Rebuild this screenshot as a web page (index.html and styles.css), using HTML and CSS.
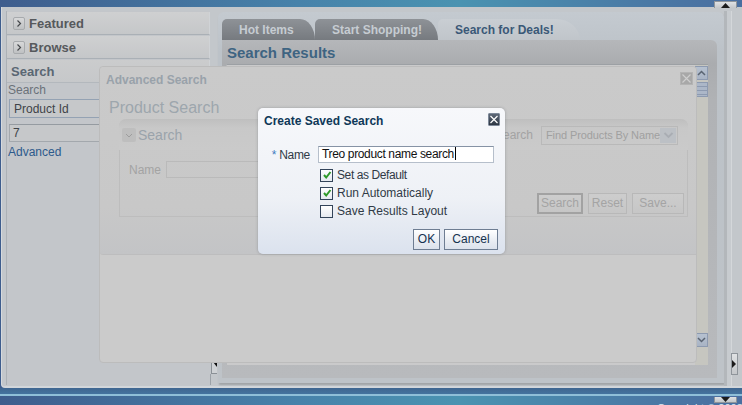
FILE: index.html
```html
<!DOCTYPE html>
<html lang="en">
<head>
    <meta charset="UTF-8">
    <meta name="viewport" content="width=device-width, initial-scale=1.0">
    <title>Search for Deals</title>
    <link rel="stylesheet" href="styles.css">
</head>
<body>
    <div class="topbar">
        <span class="edge-btn wide"><svg width="9" height="5" viewBox="0 0 9 5"><polygon points="0,5 9,5 4.5,0" fill="#1b1b1b"/></svg></span>
    </div>

    <div class="shell">
        <aside class="sidebar">
            <div class="acc-head">
                <span class="acc-icon"><svg width="10" height="11" viewBox="0 0 10 11"><path d="M3.5 2.5 L6.5 5.5 L3.5 8.5" fill="none" stroke="#45484b" stroke-width="1.2"/></svg></span>
                Featured
            </div>
            <div class="acc-head">
                <span class="acc-icon"><svg width="10" height="11" viewBox="0 0 10 11"><path d="M3.5 2.5 L6.5 5.5 L3.5 8.5" fill="none" stroke="#45484b" stroke-width="1.2"/></svg></span>
                Browse
            </div>
            <div class="acc-head open">Search</div>
            <div class="acc-body">
                <div class="side-label">Search</div>
                <div class="side-select">Product Id</div>
                <div class="side-input">7</div>
                <a class="side-link" href="#">Advanced</a>
            </div>
        </aside>

        <div class="splitter">
            <span class="split-btn"><svg width="4" height="5" viewBox="0 0 4 5"><polygon points="0,0 4,0 4,5" fill="#111"/></svg></span>
            <span class="split-line"></span>
        </div>

        <main class="content">
            <nav class="tabs">
                <span class="tab">Hot Items</span>
                <span class="tab">Start Shopping!</span>
                <span class="tab active">Search for Deals!</span>
            </nav>
            <section class="results">
                <h2 class="results-title">Search Results</h2>
                <div class="results-body">
                    <div class="vscroll">
                        <span class="sb-btn"><svg width="9" height="6" viewBox="0 0 9 6"><path d="M1 5 L4.5 1.5 L8 5" fill="none" stroke="#5a6472" stroke-width="1.5"/></svg></span>
                        <span class="sb-thumb"></span>
                        <span class="sb-track"></span>
                        <span class="sb-btn"><svg width="9" height="6" viewBox="0 0 9 6"><path d="M1 1 L4.5 4.5 L8 1" fill="none" stroke="#5a6472" stroke-width="1.5"/></svg></span>
                        <span class="sb-tail"></span>
                    </div>
                </div>
            </section>
        </main>

        <div class="rightstrip">
            <span class="edge-btn tall"><svg width="4" height="8" viewBox="0 0 4 8"><polygon points="0,0 4,4 0,8" fill="#1b1b1b"/></svg></span>
        </div>
    </div>

    <div class="bottombar">
        <span class="edge-btn wide low"><svg width="9" height="5" viewBox="0 0 9 5"><polygon points="0,0 9,0 4.5,5" fill="#1b1b1b"/></svg></span>
        <span class="copyright">Copyright © 2008, Oracle</span>
    </div>

    <!-- advanced search popup, dimmed behind the modal dialog -->
    <div class="adv">
        <div class="adv-main">
            <div class="adv-head">
                <span class="adv-title">Advanced Search</span>
                <span class="adv-close"><svg width="11" height="11" viewBox="0 0 11 11"><path d="M1.5 1.5 L9.5 9.5 M9.5 1.5 L1.5 9.5" stroke="#cfcfcf" stroke-width="1.1"/></svg></span>
            </div>
            <div class="adv-heading">Product Search</div>
            <div class="qbox">
                <div class="qbox-head">
                    <div class="qbox-left">
                        <span class="qbox-toggle"><svg width="14" height="14" viewBox="0 0 14 14"><path d="M4 6 L7 9 L10 6" fill="none" stroke="#9d9d9d" stroke-width="1"/></svg></span>
                        <span class="qbox-title">Search</span>
                    </div>
                    <div class="qbox-right">
                        <span class="q-label">Saved Search</span>
                        <span class="q-select">Find Products By Name
                            <span class="q-drop"><svg width="11" height="8" viewBox="0 0 11 8"><path d="M1.5 2 L5.5 6 L9.5 2" fill="none" stroke="#a9adb3" stroke-width="1.8"/></svg></span>
                        </span>
                    </div>
                </div>
                <div class="qbox-body">
                    <div class="q-row">
                        <span class="q-name">Name</span>
                        <span class="q-input"></span>
                    </div>
                    <div class="q-buttons">
                        <span class="q-btn primary">Search</span>
                        <span class="q-btn reset">Reset</span>
                        <span class="q-btn save">Save...</span>
                    </div>
                </div>
            </div>
        </div>
    </div>

    <div class="dialog">
        <div class="dlg-head">
            <span class="dlg-title">Create Saved Search</span>
            <span class="dlg-close"><svg width="10" height="11" viewBox="0 0 10 11"><path d="M1.5 2 L8.5 9 M8.5 2 L1.5 9" stroke="#ffffff" stroke-width="1.2"/></svg></span>
        </div>
        <div class="dlg-form">
            <label class="dlg-label"><span class="req">*</span>Name</label>
            <span class="dlg-input">Treo product name search<span class="caret"></span></span>

            <span></span>
            <label class="check"><span class="box"><svg width="10" height="10" viewBox="0 0 10 10"><path d="M2 5 L4.2 7.5 L8.5 2" fill="none" stroke="#2f9a2a" stroke-width="2"/></svg></span><span class="tight">Set as Default</span></label>

            <span></span>
            <label class="check"><span class="box"><svg width="10" height="10" viewBox="0 0 10 10"><path d="M2 5 L4.2 7.5 L8.5 2" fill="none" stroke="#2f9a2a" stroke-width="2"/></svg></span>Run Automatically</label>

            <span></span>
            <label class="check"><span class="box"></span>Save Results Layout</label>
        </div>
        <div class="dlg-buttons">
            <span class="dlg-btn ok">OK</span>
            <span class="dlg-btn cancel">Cancel</span>
        </div>
    </div>
</body>
</html>
```

FILE: styles.css
```css
* {
    box-sizing: border-box;
}

html, body {
    margin: 0;
}

body {
    width: 742px;
    height: 405px;
    overflow: hidden;
    position: relative;
    font-family: "Liberation Sans", Arial, sans-serif;
    font-size: 12px;
    background: linear-gradient(90deg, #3e5d8d 0%, #4782aa 40%, #4a93b1 62%, #4a7ba6 85%, #4a6ea0 100%);
}

/* edge bars */
.topbar {
    height: 7px;
    display: flex;
    justify-content: flex-end;
    padding: 1px 5px 0 0;
}

.edge-btn {
    display: flex;
    align-items: center;
    justify-content: center;
    background: linear-gradient(#e0e2e4, #c4c7ca);
    border: 1px solid #8f959b;
}

.edge-btn.wide {
    width: 23px;
    height: 7px;
    border-bottom: none;
}

.edge-btn.low {
    border-bottom: 1px solid #8f959b;
    border-top: none;
}

.edge-btn.tall {
    width: 7px;
    height: 22px;
}

.bottombar {
    height: 17px;
    display: flex;
    flex-direction: column;
    align-items: flex-end;
    padding: 9px 5px 0 0;
    background: linear-gradient(#3f6690 0, #44739e 6px, #8fbfd8 6px, #8fbfd8 8px, transparent 8px);
    overflow: hidden;
}

.copyright {
    margin-top: -1px;
    color: #dfe9f0;
    font-size: 11px;
    white-space: nowrap;
    width: 80px;
}

/* main frame */
.shell {
    height: 381px;
    display: flex;
    margin-left: 1px;
    padding: 4px 0 0 4px;
    background: #c3c7cb;
    border-left: 1px solid #d6dade;
    border-bottom: 2px solid #d2d6da;
    border-radius: 0 0 0 4px;
}

.sidebar {
    width: 204px;
    display: flex;
    flex-direction: column;
    background: #c3c6ca;
    border-left: 1px solid #acb1b6;
    margin-bottom: 1px;
}

.acc-head {
    height: 23px;
    margin-top: 1px;
    display: flex;
    align-items: center;
    gap: 4px;
    padding-left: 6px;
    font-size: 13px;
    font-weight: bold;
    color: #56595c;
    background: linear-gradient(#cfd0d1, #c5c7c9);
    border-bottom: 1px solid #aab0b6;
    border-right: 1px solid #d0d3d6;
}

.acc-head.open {
    padding-left: 4px;
    color: #5a6773;
    background: linear-gradient(#cbcccd, #c6c8ca);
    border-bottom: 1px solid #b3b8bd;
}

.acc-icon {
    width: 12px;
    height: 13px;
    display: flex;
    align-items: center;
    justify-content: center;
    border: 1px solid #a7aaad;
    border-radius: 2px;
    background: linear-gradient(#d7d8d9, #bfc1c3);
}

.acc-body {
    display: flex;
    flex-direction: column;
    align-items: flex-start;
    padding-left: 1px;
}

.side-label {
    line-height: 14px;
    color: #6b7279;
}

.side-select {
    margin: 2px 0 0 1px;
    width: 190px;
    height: 19px;
    padding: 2px 4px;
    color: #3e4348;
    background: #c6c8ca;
    border: 1px solid #94a2b3;
}

.side-input {
    margin: 6px 0 0 1px;
    width: 190px;
    height: 18px;
    padding: 1px 3px;
    color: #3e4348;
    background: #c6c8ca;
    border: 1px solid #a3a8ad;
    border-top-color: #959ba1;
}

.side-link {
    margin-top: 3px;
    line-height: 14px;
    color: #2d5a8c;
    text-decoration: none;
}

.splitter {
    width: 8px;
    display: flex;
    flex-direction: column;
    justify-content: flex-end;
    padding-bottom: 1px;
}

.split-btn {
    margin-left: 1px;
    width: 6px;
    height: 12px;
    display: flex;
    justify-content: flex-end;
    border-left: 1px solid #8a9096;
    border-bottom: 1px solid #8a9096;
    background: #cfd2d5;
}

.split-line {
    height: 11px;
    border-left: 1px solid #9ca2a8;
}

/* content with tabs */
.content {
    width: 506px;
    margin: 1px 0 3px 0;
    padding: 7px 7px 0 4px;
    display: flex;
    flex-direction: column;
    background: linear-gradient(#c4cad0, #bcc2c8 40px, #bec3c8);
    border-radius: 6px 6px 0 0;
    box-shadow: 1px 2px 2px rgba(0, 0, 0, 0.18);
}

.tabs {
    height: 21px;
    display: flex;
}

.tab {
    height: 21px;
    line-height: 22px;
    padding-left: 17px;
    font-weight: bold;
    color: #c6ccd2;
    background: linear-gradient(#8e9297, #767a7f);
    border-radius: 5px 15px 0 0 / 5px 21px 0 0;
}

.tab:nth-child(1) {
    width: 93px;
}

.tab:nth-child(2) {
    width: 123px;
}

.tab.active {
    width: 142px;
    color: #3a5877;
    background: linear-gradient(#c9ced3, #c0c5ca);
    border-radius: 5px 24px 0 0 / 5px 21px 0 0;
}

.results {
    flex: 1;
    display: flex;
    flex-direction: column;
    background: linear-gradient(#b5b7ba, #aaacaf 24px, #b0b2b5 60px, #b8babd);
    border-radius: 0 6px 0 0;
    margin-bottom: 5px;
}

.results-title {
    margin: 0;
    height: 24px;
    line-height: 26px;
    padding-left: 5px;
    font-size: 15px;
    color: #3e6482;
}

.results-body {
    flex: 1;
    margin: 0 9px 13px 4px;
    display: flex;
    justify-content: flex-end;
    background: #cacacb;
    border-top: 1px solid #9ca0a4;
    border-left: 1px solid #b7b9bb;
}

.vscroll {
    width: 13px;
    display: flex;
    flex-direction: column;
    padding-top: 1px;
    background: #c6c6c0;
}

.sb-btn {
    height: 14px;
    display: flex;
    align-items: center;
    justify-content: center;
    background: linear-gradient(#b6c1d0, #a9b4c5);
    border: 1px solid #8d9ab0;
}

.sb-thumb {
    height: 15px;
    margin-top: 2px;
    background: repeating-linear-gradient(#acb7c8 0 3px, #8d9ab0 3px 4px);
    border: 1px solid #8d9ab0;
}

.sb-track {
    flex: 1;
}

.sb-tail {
    height: 18px;
}

.rightstrip {
    flex: 1;
    display: flex;
    flex-direction: column;
    justify-content: flex-end;
    align-items: center;
    padding: 0 1px 11px 0;
    border-left: 3px solid #b3b7bb;
    box-shadow: inset 4px 0 0 #c7cbcf, inset 5px 0 0 #d4d7da;
}

/* advanced search popup (dimmed) */
.adv {
    position: absolute;
    left: 99px;
    top: 66px;
    width: 598px;
    height: 297px;
    background: #cbcbcb;
    border: 1px solid #bcbcbc;
    border-radius: 4px;
}

.adv-main {
    height: 188px;
    padding: 6px 3px 0 6px;
    background: linear-gradient(#cacaca, #c8c8c8 140px, #c3c4c6);
    border-radius: 4px 4px 0 3px;
    border-bottom: 1px solid #bdbdbe;
}

.adv-head {
    display: flex;
    justify-content: space-between;
    align-items: flex-start;
}

.adv-title {
    line-height: 14px;
    font-weight: bold;
    color: #99a2aa;
}

.adv-close {
    width: 13px;
    height: 13px;
    margin-top: -1px;
    display: flex;
    align-items: center;
    justify-content: center;
    background: #a8a8a8;
    border: 1px solid #b4b4b4;
}

.adv-heading {
    margin: 12px 0 0 3px;
    line-height: 18px;
    font-size: 16px;
    color: #9da6ad;
}

.qbox {
    margin: 2px 0 0 13px;
    width: 569px;
    height: 98px;
    display: flex;
    flex-direction: column;
}

.qbox-head {
    height: 31px;
    display: flex;
    justify-content: space-between;
    align-items: center;
    padding: 0 10px 0 3px;
    background: linear-gradient(#c0c0c0, #c8c8c8 8px, #cacaca);
    border-radius: 7px 7px 0 0;
    border-top: 1px solid #bfbfbf;
}

.qbox-left {
    display: flex;
    align-items: center;
    gap: 2px;
}

.qbox-toggle {
    width: 14px;
    height: 14px;
    display: flex;
    background: #bebebe;
    border-radius: 2px;
}

.qbox-title {
    font-size: 14px;
    color: #9aa3ab;
}

.qbox-right {
    display: flex;
    align-items: center;
    gap: 8px;
}

.q-label {
    color: #a3a3a3;
    font-size: 12px;
}

.q-select {
    width: 137px;
    height: 19px;
    display: flex;
    justify-content: space-between;
    align-items: center;
    padding: 0 1px 0 4px;
    font-size: 11px;
    letter-spacing: -0.1px;
    color: #a0a0a0;
    border: 1px solid #b9b9b9;
    white-space: nowrap;
}

.q-drop {
    width: 16px;
    height: 15px;
    display: flex;
    align-items: center;
    justify-content: center;
    background: #bcc0c5;
}

.qbox-body {
    flex: 1;
    display: flex;
    flex-direction: column;
    padding: 11px 3px 0 9px;
    border: 1px solid #bdbdbd;
    border-top: none;
}

.q-row {
    display: flex;
    align-items: center;
    gap: 5px;
}

.q-name {
    color: #a3a3a3;
}

.q-input {
    width: 300px;
    height: 17px;
    border: 1px solid #bababa;
}

.q-buttons {
    margin-top: 15px;
    display: flex;
    justify-content: flex-end;
    gap: 5px;
}

.q-btn {
    height: 21px;
    width: 39px;
    line-height: 19px;
    text-align: center;
    color: #a4a4a4;
    border: 1px solid #b8b8b8;
    background: linear-gradient(#cdcdcd, #c6c6c6);
}

.q-btn.primary {
    width: 46px;
    border: 2px solid #a2a2a2;
    line-height: 17px;
}

.q-btn.save {
    width: 52px;
}

/* modal dialog */
.dialog {
    position: absolute;
    left: 258px;
    top: 108px;
    width: 247px;
    height: 146px;
    padding: 5px 5px 0 6px;
    background: linear-gradient(#f7f8fb, #eef1f6 90px, #dbe2ee);
    border-radius: 5px;
    box-shadow: 0 0 3px rgba(40, 50, 60, 0.3);
}

.dlg-head {
    display: flex;
    justify-content: space-between;
    align-items: flex-start;
}

.dlg-title {
    margin-top: 1px;
    line-height: 14px;
    font-weight: bold;
    color: #0f3858;
}

.dlg-close {
    width: 12px;
    height: 13px;
    display: flex;
    align-items: center;
    justify-content: center;
    background: linear-gradient(#5d6877, #2d3643);
    border: 1px solid #7d8898;
    border-radius: 1px;
}

.dlg-form {
    margin-top: 18px;
    display: grid;
    grid-template-columns: 46px 176px;
    column-gap: 8px;
    row-gap: 6px;
    align-items: center;
}

.dlg-label {
    text-align: right;
    letter-spacing: -0.3px;
    color: #303a46;
}

.req {
    color: #3f7cc2;
    margin-right: 3px;
}

.dlg-input {
    height: 17px;
    line-height: 15px;
    padding-left: 3px;
    letter-spacing: -0.35px;
    color: #111;
    background: #fff;
    border: 1px solid #b6bfcb;
    border-top-color: #8693a5;
}

.caret {
    display: inline-block;
    width: 1px;
    height: 13px;
    margin-left: 1px;
    vertical-align: -2px;
    background: #000;
}

.check {
    height: 12px;
    display: flex;
    align-items: center;
    gap: 4px;
    padding-left: 2px;
    color: #303a46;
}

.tight {
    letter-spacing: -0.4px;
}

.box {
    width: 13px;
    height: 13px;
    display: flex;
    align-items: center;
    justify-content: center;
    background: linear-gradient(#ffffff, #e6eaf0);
    border: 1px solid #33445a;
}

.dlg-buttons {
    margin-top: 12px;
    padding-right: 2px;
    display: flex;
    justify-content: flex-end;
    gap: 4px;
}

.dlg-btn {
    height: 21px;
    line-height: 19px;
    text-align: center;
    color: #15324f;
    background: linear-gradient(#ffffff, #e8ecf2 60%, #dce2ec);
    border: 1px solid #6e7d92;
}

.dlg-btn.ok {
    width: 27px;
}

.dlg-btn.cancel {
    width: 54px;
}
```
